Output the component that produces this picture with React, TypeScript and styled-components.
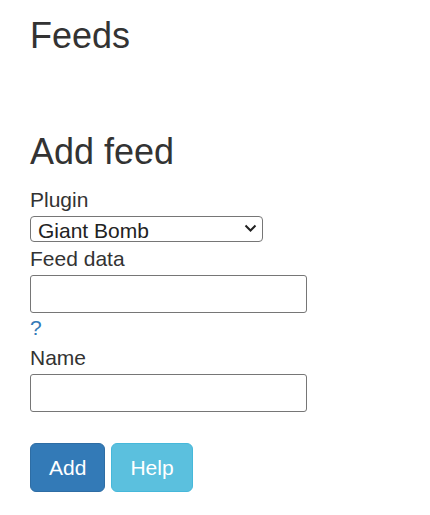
import React from "react";
import styled, { createGlobalStyle } from "styled-components";

const GlobalStyle = createGlobalStyle`
  html, body {
    margin: 0;
    padding: 0;
    background: #fff;
  }
  body {
    font-family: "Liberation Sans", Arial, sans-serif;
    font-size: 21px;
    line-height: 30px;
    color: #333;
  }
`;

const Page = styled.div`
  padding: 16px 30px 0;
`;

const Heading = styled.h1<{ $gap?: number }>`
  margin: 0 0 ${(p) => p.$gap ?? 14}px;
  font-size: 36px;
  font-weight: 500;
  line-height: 1.1;
  color: #333;
`;

const Form = styled.form`
  display: flex;
  flex-direction: column;
  align-items: flex-start;
`;

const Label = styled.label`
  display: block;
  font-size: 21px;
  line-height: 30px;
`;

const SelectWrap = styled.div`
  position: relative;
  margin: 1px 0 2px;
`;

const Select = styled.select`
  appearance: none;
  -webkit-appearance: none;
  display: block;
  box-sizing: border-box;
  width: 233px;
  height: 26px;
  font-family: "Liberation Sans", Arial, sans-serif;
  font-size: 21px;
  line-height: 25px;
  color: #222;
  border: 1px solid #767676;
  border-radius: 4px;
  background: #fff;
  padding: 1px 28px 0 7px;
`;

const Chevron = styled.svg`
  position: absolute;
  right: 6px;
  top: 8px;
  width: 13px;
  height: 9px;
  pointer-events: none;
`;

const Input = styled.input`
  box-sizing: border-box;
  width: 277px;
  height: 38px;
  margin-top: 1px;
  font-family: "Liberation Sans", Arial, sans-serif;
  font-size: 21px;
  border: 1px solid #767676;
  border-radius: 3px;
  padding: 2px 6px;
  background: #fff;
`;

const HelpLink = styled.a`
  display: block;
  color: #337ab7;
  text-decoration: none;
  line-height: 30px;
`;

const Actions = styled.div`
  display: flex;
  gap: 6px;
  margin-top: 31px;
`;

const Button = styled.button<{ $variant: "primary" | "info" }>`
  box-sizing: border-box;
  height: 49px;
  padding: 9px 18px;
  font-family: "Liberation Sans", Arial, sans-serif;
  font-size: 21px;
  line-height: 29px;
  color: #fff;
  border-radius: 6px;
  cursor: pointer;
  background: ${(p) => (p.$variant === "primary" ? "#337ab7" : "#5bc0de")};
  border: 1px solid ${(p) => (p.$variant === "primary" ? "#2e6da4" : "#46b8da")};
`;

export default function App() {
  return (
    <Page>
      <GlobalStyle />
      <Heading $gap={76}>Feeds</Heading>
      <Heading>Add feed</Heading>
      <Form onSubmit={(e) => e.preventDefault()}>
        <Label htmlFor="plugin">Plugin</Label>
        <SelectWrap>
          <Select id="plugin" defaultValue="giantbomb">
            <option value="giantbomb">Giant Bomb</option>
          </Select>
          <Chevron viewBox="0 0 13 9">
            <path
              d="M1.5 1.5 L6.5 6.5 L11.5 1.5"
              fill="none"
              stroke="#222"
              strokeWidth="2"
            />
          </Chevron>
        </SelectWrap>
        <Label htmlFor="data">Feed data</Label>
        <Input id="data" type="text" />
        <HelpLink href="#">?</HelpLink>
        <Label htmlFor="name">Name</Label>
        <Input id="name" type="text" />
        <Actions>
          <Button type="submit" $variant="primary">Add</Button>
          <Button type="button" $variant="info">Help</Button>
        </Actions>
      </Form>
    </Page>
  );
}
